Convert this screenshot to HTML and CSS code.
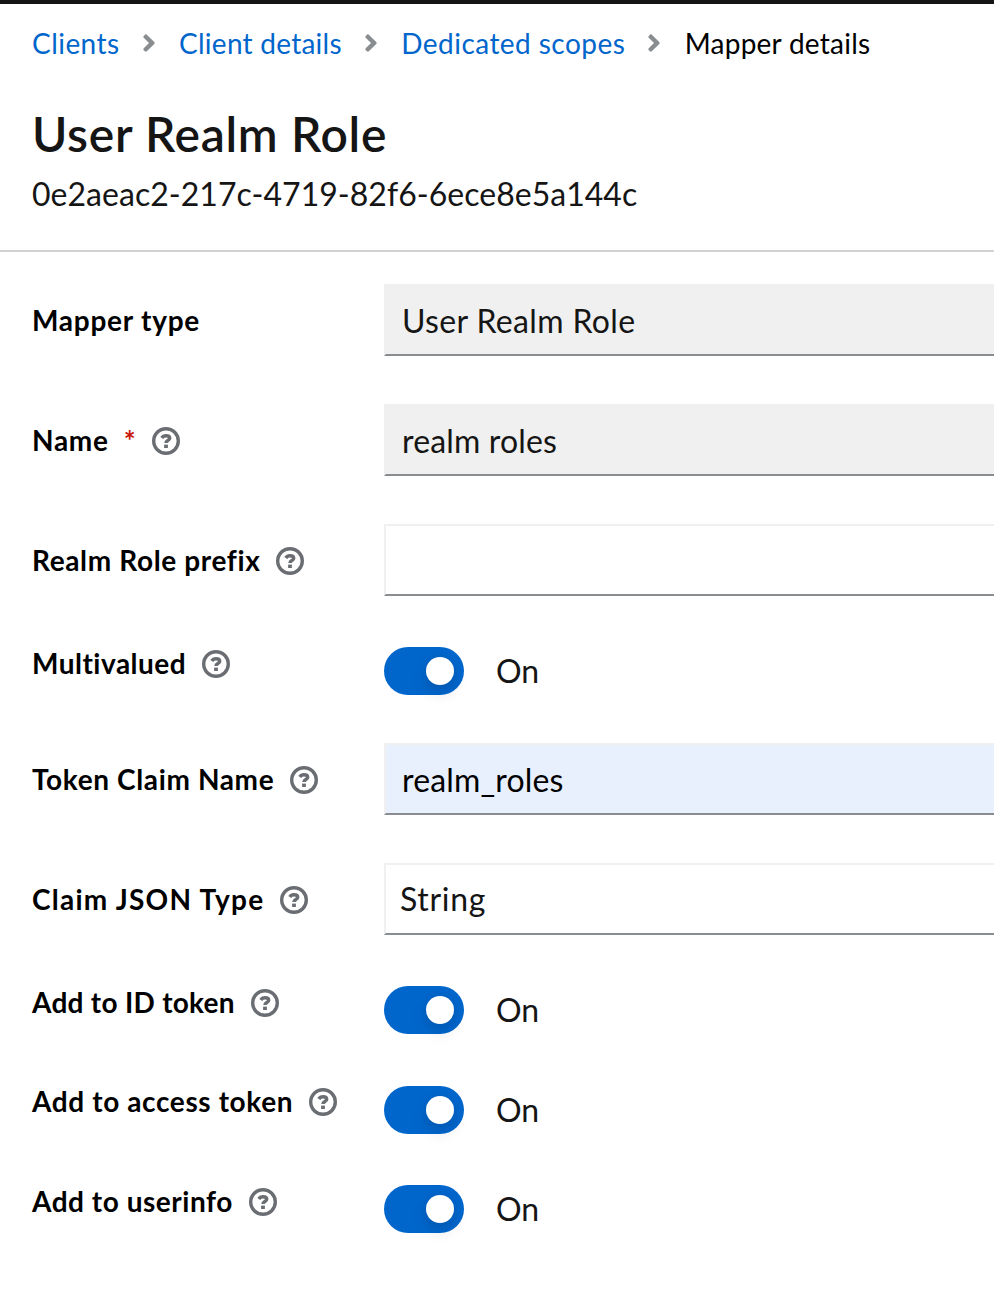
FILE: index.html
```html
<!DOCTYPE html>
<html lang="en">
<head>
<meta charset="utf-8">
<title>Mapper details</title>
<link rel="stylesheet" href="styles.css">
</head>
<body>
<svg class="defs" aria-hidden="true">
  <symbol id="help" viewBox="0 0 28 28">
    <circle cx="14" cy="14" r="12.300" fill="none" stroke="currentColor" stroke-width="3.400"/>
    <path d="M9.800 11C10.700 9.500 12 8.700 14 8.700c2.300 0 3.700 1 3.700 2.600 0 2.400-3.700 2.100-3.700 4.700" fill="none" stroke="currentColor" stroke-width="3.500"/>
    <path d="M12.100 17.600h3.800v3.400h-3.800z" fill="currentColor"/>
  </symbol>
  <symbol id="angle" viewBox="0 0 256 512">
    <path fill="currentColor" d="M224.300 273l-136 136c-9.400 9.400-24.600 9.400-33.900 0l-22.600-22.600c-9.400-9.400-9.400-24.600 0-33.900l96.400-96.400-96.400-96.400c-9.400-9.400-9.400-24.600 0-33.900L54.300 103c9.400-9.400 24.600-9.400 33.900 0l136 136c9.500 9.400 9.500 24.600.1 34z"/>
  </symbol>
</svg>
<header class="header">
  <nav class="breadcrumb">
    <a class="crumb t-clients">Clients</a><svg class="angle"><use href="#angle"/></svg>
    <a class="crumb t-client-details">Client details</a><svg class="angle"><use href="#angle"/></svg>
    <a class="crumb t-scopes">Dedicated scopes</a><svg class="angle"><use href="#angle"/></svg>
    <span class="crumb current t-mapper-details">Mapper details</span>
  </nav>
  <h1 class="title">User Realm Role</h1>
  <p class="subtitle">0e2aeac2-217c-4719-82f6-6ece8e5a144c</p>
</header>
<main class="form">
  <div class="row">
    <div class="label"><span class="t-type">Mapper type</span></div>
    <div class="input readonly t-value">User Realm Role</div>
  </div>
  <div class="row">
    <div class="label"><span class="t-name">Name</span><span class="required">*</span><svg class="help"><use href="#help"/></svg></div>
    <div class="input readonly t-roles">realm roles</div>
  </div>
  <div class="row">
    <div class="label"><span class="t-prefix">Realm Role prefix</span><svg class="help"><use href="#help"/></svg></div>
    <div class="input"></div>
  </div>
  <div class="row toggle">
    <div class="label"><span class="t-multi">Multivalued</span><svg class="help"><use href="#help"/></svg></div>
    <div class="control"><span class="switch"><span class="knob"></span></span><span>On</span></div>
  </div>
  <div class="row">
    <div class="label"><span class="t-token">Token Claim Name</span><svg class="help"><use href="#help"/></svg></div>
    <div class="input autofill t-roles">realm_roles</div>
  </div>
  <div class="row">
    <div class="label"><span class="t-json">Claim JSON Type</span><svg class="help"><use href="#help"/></svg></div>
    <div class="input select">String</div>
  </div>
  <div class="row toggle tall">
    <div class="label"><span class="t-id">Add to ID token</span><svg class="help"><use href="#help"/></svg></div>
    <div class="control"><span class="switch"><span class="knob"></span></span><span>On</span></div>
  </div>
  <div class="row toggle raised">
    <div class="label"><span class="t-access">Add to access token</span><svg class="help"><use href="#help"/></svg></div>
    <div class="control"><span class="switch"><span class="knob"></span></span><span>On</span></div>
  </div>
  <div class="row toggle">
    <div class="label"><span class="t-userinfo">Add to userinfo</span><svg class="help"><use href="#help"/></svg></div>
    <div class="control"><span class="switch"><span class="knob"></span></span><span>On</span></div>
  </div>
</main>
</body>
</html>
```
FILE: styles.css
```css
* { box-sizing: border-box; }
body {
  margin: 0;
  height: 1290px;
  overflow: hidden;
  background: #fff;
  color: #151515;
  border-top: 4px solid #151515;
  font-family: Lato, "Open Sans", sans-serif;
  font-size: 32px;
  line-height: 40px;
}
.defs { display: none; }

.header {
  height: 248px;
  padding: 18px 0 0 32px;
  border-bottom: 2px solid #d2d2d2;
}
.breadcrumb {
  display: flex;
  align-items: center;
  gap: 22px;
  height: 42px;
  font-size: 28px;
}
.crumb { color: #06c; white-space: nowrap; }
.current { color: #000; }
.angle { width: 14px; height: 28px; margin-right: 1.5px; color: #8a8d90; flex: none; }
.title {
  margin: 39px 0 0;
  font-size: 48px;
  line-height: 62px;
  font-weight: 600;
  letter-spacing: 0.68px;
}
.subtitle { margin: 9px 0 0; letter-spacing: 0.03px; }

.form {
  display: flex;
  flex-direction: column;
  gap: 48px;
  padding: 32px 0 0 32px;
}
.row {
  display: grid;
  grid-template-columns: 352px 1fr;
  height: 72px;
}
.toggle { height: 51px; }
.tall { height: 52px; }
.label {
  display: flex;
  align-items: center;
  height: 36px;
  margin-top: 19px;
  color: #000;
  font-size: 28px;
  font-weight: 700;
  white-space: nowrap;
}
.label > span { padding-bottom: 2px; }
.toggle .label { margin-top: 2px; }
.raised .label { margin-top: 1px; }
.help { width: 28px; height: 28px; margin-left: 16px; color: #6a6e73; flex: none; }
.required { margin-left: 15px; color: #c9190b; width: 12px; }

.input {
  height: 72px;
  padding: 15px 0 0 16px;
  border: 2px solid #f0f0f0;
  border-right: 0;
  border-bottom-color: #8a8d90;
}
.readonly { background: #f0f0f0; }
.autofill { background: #e8f0fe; color: #000; }
.select { padding: 14px 0 0 14px; letter-spacing: 0.7px; }

.control { display: flex; align-items: center; gap: 32px; height: 48px; margin-top: 3px; }
.switch {
  display: flex;
  align-items: center;
  justify-content: flex-end;
  width: 80px;
  height: 48px;
  padding-right: 10px;
  border-radius: 24px;
  background: #06c;
}
.knob {
  width: 28px;
  height: 28px;
  border-radius: 50%;
  background: #fff;
  box-shadow: 0 8px 16px rgba(3, 3, 3, 0.12), 0 0 8px rgba(3, 3, 3, 0.06);
}

.t-clients { letter-spacing: 0.45px; }
.t-client-details { letter-spacing: 0.25px; }
.t-scopes { letter-spacing: 0.45px; }
.t-mapper-details { letter-spacing: 0.25px; }
.t-type { letter-spacing: 0.75px; }
.t-name { letter-spacing: 0.7px; }
.t-prefix { letter-spacing: 0.63px; }
.t-multi { letter-spacing: 0.5px; }
.t-token { letter-spacing: 0.63px; }
.t-json { letter-spacing: 1.24px; }
.t-id { letter-spacing: 0.28px; }
.t-access { letter-spacing: 0.62px; }
.t-userinfo { letter-spacing: 0.53px; }
.t-value { letter-spacing: 0.35px; }
.t-roles { letter-spacing: 0.15px; }
```
